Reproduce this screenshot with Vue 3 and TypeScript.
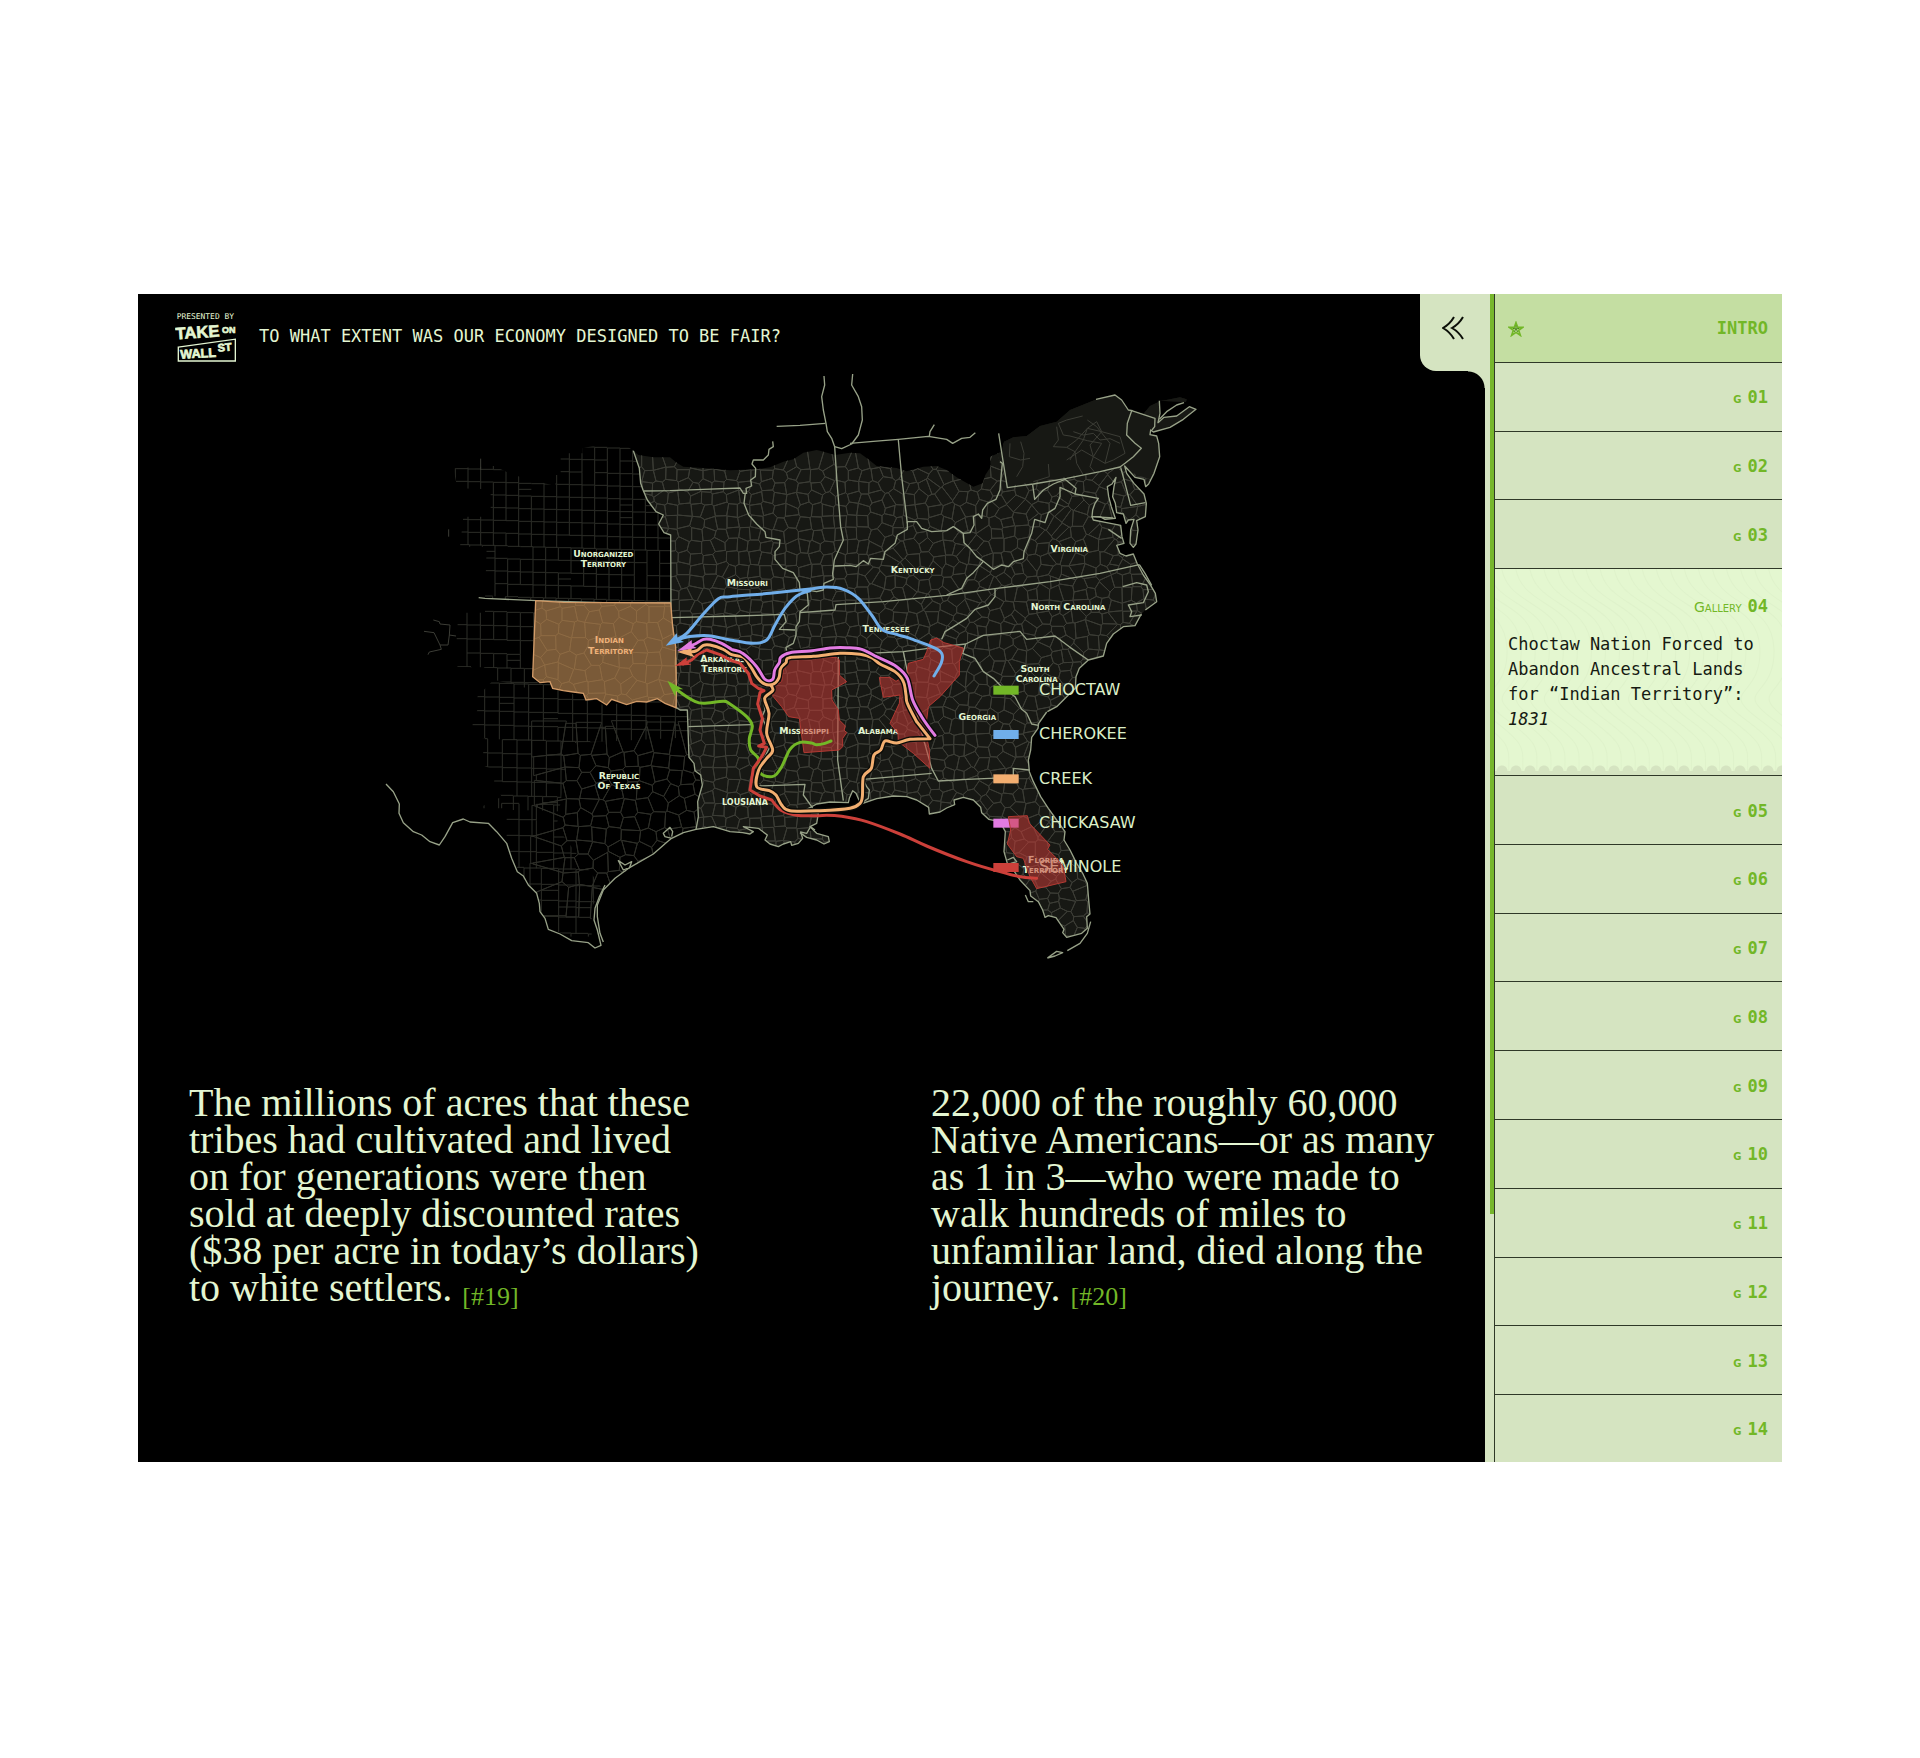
<script setup lang="ts">
import { ref } from 'vue'

type Part = [dx: number, dy: number, points: string]
type Point = [x: number, y: number]

interface Room {
  id: string
  active?: boolean
}

interface Label {
  x: number
  y: number
  text: string
  tone?: string
}

interface Route {
  name: string
  color: string
  d: string
  head?: string
  cased?: boolean
}

/* The map is digitised in four sheets; each sheet has its own origin. */
const NE = 1290
const S = 870

const rooms: Room[] = Array.from({ length: 14 }, (_, i) => ({
  id: String(i + 1).padStart(2, '0'),
  active: i === 3,
}))

const progress = ref(78.8)

function toPoints(parts: Part[]): Point[] {
  return parts.flatMap(([dx, dy, text]) =>
    text
      .trim()
      .split(/\s+/)
      .map((pair) => {
        const [x, y] = pair.split(',').map(Number)
        return [x + dx, y + dy] as Point
      }),
  )
}

function line(parts: Part[], close = false): string {
  return 'M' + toPoints(parts).map((p) => p.join(' ')).join('L') + (close ? 'Z' : '')
}

function curve(parts: Part[]): string {
  const p = toPoints(parts)
  let d = `M${p[0].join(' ')}`
  for (let i = 0; i < p.length - 1; i++) {
    const a = p[Math.max(i - 1, 0)]
    const b = p[i]
    const c = p[i + 1]
    const e = p[Math.min(i + 2, p.length - 1)]
    const c1 = [b[0] + (c[0] - a[0]) / 6, b[1] + (c[1] - a[1]) / 6].map(Math.round)
    const c2 = [c[0] - (e[0] - b[0]) / 6, c[1] - (e[1] - b[1]) / 6].map(Math.round)
    d += `C${c1.join(' ')} ${c2.join(' ')} ${c.join(' ')}`
  }
  return d
}

function noise(seed: number): () => number {
  let s = seed
  return () => {
    s = (s * 1664525 + 1013904223) % 4294967296
    return s / 4294967296
  }
}

/* County mesh: Voronoi cells of a jittered grid. */
function cells(x0: number, y0: number, x1: number, y1: number, size: number, jitter: (x: number) => number, seed: number): string {
  const rnd = noise(seed)
  const cols = Math.ceil((x1 - x0) / size)
  const rows = Math.ceil((y1 - y0) / size)
  const sites: Point[][] = []
  for (let r = 0; r < rows; r++) {
    const row: Point[] = []
    for (let c = 0; c < cols; c++) {
      const x = x0 + (c + 0.5) * size
      const y = y0 + (r + 0.5) * size
      const j = jitter(x) * size * 2
      row.push([x + (rnd() - 0.5) * j, y + (rnd() - 0.5) * j])
    }
    sites.push(row)
  }
  let d = ''
  for (let r = 0; r < rows; r++) {
    for (let c = 0; c < cols; c++) {
      const s = sites[r][c]
      const w = size * 1.6
      let poly: Point[] = [
        [s[0] - w, s[1] - w],
        [s[0] + w, s[1] - w],
        [s[0] + w, s[1] + w],
        [s[0] - w, s[1] + w],
      ]
      for (let rr = Math.max(0, r - 2); rr <= Math.min(rows - 1, r + 2); rr++) {
        for (let cc = Math.max(0, c - 2); cc <= Math.min(cols - 1, c + 2); cc++) {
          if (rr === r && cc === c) continue
          const o = sites[rr][cc]
          const nx = o[0] - s[0]
          const ny = o[1] - s[1]
          const k = nx * ((o[0] + s[0]) / 2) + ny * ((o[1] + s[1]) / 2)
          const next: Point[] = []
          poly.forEach((p, i) => {
            const q = poly[(i + 1) % poly.length]
            const dp = p[0] * nx + p[1] * ny - k
            const dq = q[0] * nx + q[1] * ny - k
            if (dp <= 0) next.push(p)
            if (dp < 0 !== dq < 0) {
              const t = dp / (dp - dq)
              next.push([p[0] + (q[0] - p[0]) * t, p[1] + (q[1] - p[1]) * t])
            }
          })
          poly = next
        }
      }
      if (poly.length > 2) d += 'M' + poly.map((p) => p.map(Math.round).join(' ')).join('L') + 'Z'
    }
  }
  return d
}

/* Surveyed counties: near-square blocks with a few missing sides. */
function blocks(x0: number, y0: number, x1: number, y1: number, w: number, h: number, seed: number): string {
  const rnd = noise(seed)
  let d = ''
  let shift = 0
  let n = 0
  for (let y = y0; y < y1; y += h) {
    if (n++ % 4 === 0) shift = Math.round((rnd() - 0.5) * w * 0.4)
    for (let x = x0 + shift; x < x1; x += w) {
      const drop = Math.round((x - x0) * 0.03)
      if (rnd() > 0.05) d += `M${x} ${y + drop}h${w}`
      if (rnd() > 0.05) d += `M${x} ${y + drop}v${h}`
      if (rnd() > 0.97) d += `M${x} ${y + drop + 18}h${w}`
    }
  }
  return d
}

const coast: Part[] = [
  [NE, 0, '1078,122 1080,160 1074,188 1092,172 1130,168 1168,140 1188,148 1150,178 1110,202 1060,216 1052,210 1050,224 1070,228 1076,250 1079,290 1062,340 1046,372 1037,380 1032,358 1005,352 985,330 974,318 980,340 1002,370 1032,402 1039,430 1036,470 1010,482 1014,510 1008,552 1000,562 990,550 992,510 1002,478 985,480 978,490 970,462 950,458 946,430 938,410 942,380 948,352 936,372 922,380 926,410 934,440 946,475 915,478 900,470 876,470 880,480 920,488 962,496 966,530 972,550 950,556 960,580 978,588 1000,582 1012,612 1030,645 1052,676 1066,700 1070,725 1036,750'],
  [NE, 0, '1024,762 1005,797 970,800 940,822 920,850 910,888 865,900 838,925 828,950 826,985 800,1010 770,1040 742,1055'],
  [NE, S, '740,186 716,220 714,235 695,262 692,300 685,330 688,365 700,395 722,440 745,475 770,510 795,545 792,570 810,600 830,640 848,670 862,700 866,750 870,792 860,800 862,835 845,850 800,862 788,848 792,838 768,803 745,797 735,802 728,780 715,755 692,738 690,722 660,690 640,660 622,640 612,605 616,545 600,515 566,508 545,488 542,472 520,450 490,442 462,450 464,464 440,474 420,486 388,492 386,472 350,450 320,440 280,438 230,446 182,462 168,430 158,422 148,445 145,458 90,456 50,462 20,478 35,490 55,490 50,520 30,530 50,550 85,560 88,575 72,582 50,570 20,562 0,548'],
  [0, S, '1335,540 1322,530 1310,550 1292,546 1298,565 1285,580 1265,586 1262,575 1240,582 1225,590 1200,582 1185,570 1192,555 1165,535 1120,530 1150,545 1140,552 1118,548 1080,545 1030,530 978,538 940,548 905,565 892,575 850,612 780,652 735,685 700,720 682,765 682,800 690,850 700,876'],
]

const northEdge: Part[] = [
  [0, 0, '790,272 805,285 850,292 900,292 920,308 940,320 1000,324 1080,331 1160,328 1200,322 1240,305 1270,298 1300,278 1340,270'],
  [NE, 0, '60,272 105,285 150,278 180,280 205,298 230,318 290,324 320,334 370,320 410,318 440,330 470,352 520,380 548,370 556,345 572,320 570,290 605,275 612,245 640,232 680,228 720,198 770,185 810,150 890,118 945,105 965,122 985,150 1030,162 1050,138 1080,124 1140,112 1160,118 1158,126'],
]

const westEdge: Part[] = [
  [0, S, '978,538 985,500 983,455 997,405 992,375 975,362 972,340 957,322 952,180 930,180 918,172'],
  [0, 0, '919,1000 917,900 908,800 903,770 902,525 882,518 866,492 880,465 858,455 832,420 820,392 812,370 808,325 790,272'],
]

const seaCoast: Part[] = coast.slice(0, 3)
const gulf: Part[] = [[0, S, '1335,540 1322,530 1310,550 1292,546 1298,565 1285,580 1265,586 1262,575 1240,582 1225,590 1200,582 1185,570 1192,555 1165,535 1120,530 1150,545 1140,552 1118,548 1080,545 1030,530 978,538']]
const landPath = line([...northEdge, ...seaCoast, ...gulf, ...westEdge], true)

const eastMesh = cells(780, 290, 2420, 1780, 36, (x) => (x < 1500 ? 0.24 : 0.4), 7)
const texasMesh = cells(540, 1140, 1000, 1620, 44, () => 0.3, 21)
const indianMesh = cells(480, 700, 930, 1060, 44, () => 0.32, 5)
const plainsMesh = blocks(260, 250, 920, 740, 38, 38, 3)
const panhandleMesh = blocks(255, 752, 500, 1000, 40, 42, 11)
const texasBlocks = blocks(305, 968, 1000, 1330, 44, 42, 8)
const southBlocks = blocks(400, 1330, 700, 1740, 52, 48, 4)

const plainsClip = line([[0, 0, '250,325 372,318 430,345 556,378 556,345 572,345 572,280 638,280 638,265 704,250 742,236 790,272 808,325 820,392 832,420 858,455 880,465 866,492 882,518 902,525 903,725 700,727 497,722 345,715 350,560 270,560 280,470 362,470 362,388 262,385']], true)
const panhandleClip = line([[0, 0, '345,715 497,722 490,950 530,1000 375,960 376,925 255,920 265,758 345,758']], true)
const texasClip = line([[0, 0, '365,965 490,955 540,970 560,990 640,1010 700,1035 860,1020 918,1042'], [0, S, '952,180 957,322 975,362 997,405 983,455 978,538 905,565 850,612 735,685 700,720 665,770 665,860 600,860 540,835 515,790 500,730 455,680 430,630 410,580 410,475 325,475 395,440 372,400 375,360 335,345 345,265 305,262 308,222 322,180 322,140']], true)

const borders: string[] = [
  ...coast.slice(0, 3).map((p) => line([p])),
  line([coast[3]]),
  line(westEdge),
  line([[0, 0, '326,713 345,715 500,722 700,728 902,729']]),
  line([[0, 0, '820,393 900,392 1000,388 1110,384 1120,400 1130,400 1128,385 1145,378 1142,360 1156,350 1157,325 1146,312 1150,300 1180,300 1195,285 1197,268 1210,260 1208,244']]),
  line([[0, 0, '1126,398 1122,430 1136,465 1160,492 1185,515 1188,532 1230,540 1228,560 1215,575 1215,598 1238,625 1270,638 1288,668 1290,690 1312,700 1315,735 1290,755 1288,785 1278,800 1278,825 1270,850 1248,862 1252,885 1240,910 1225,950']]),
  line([[0, 0, '904,773 1100,768 1243,763 1248,785 1228,808 1275,810']]),
  line([[0, 0, '1220,199 1290,196 1366,190']]),
  line([[NE, 0, '72,48 74,75 65,110 70,150 78,190 82,215 95,235 104,260 125,266 155,252 175,225 187,180 185,140 175,110 155,75 158,42']]),
  line([[NE, 0, '150,250 220,244 295,238 385,229 440,238 458,250 485,235 510,232 526,218']]),
  line([[NE, 0, '388,229 390,215 403,194']]),
  line([[NE, 0, '104,260 112,380 122,500 130,540 112,580 103,600 98,640 100,658 72,670 70,690 50,695 10,688']]),
  line([[NE, 0, '103,618 150,616 168,620 190,602 205,612 212,595 250,598 255,575 285,550 292,525 322,508 322,485 350,485 365,505 395,515 440,512 460,500 490,520 510,518 522,495 520,470 535,462 545,475 548,450 562,430 588,418 600,390 604,340 607,310 600,305']]),
  line([[NE, 0, '295,240 305,350 322,490']]),
  line([[NE, 0, '596,220 607,290 622,383 700,372 800,355 900,335 960,321 975,310 1000,290 1024,265 1005,250 980,225 982,190 995,152 1065,175 1064,200 1056,210']]),
  line([[NE, 0, '998,152 985,150 965,120 945,105 888,118']]),
  line([[NE, 0, '1078,178 1100,155 1130,135 1152,128']]),
  line([[NE, 0, '962,322 975,370 992,436 1036,428']]),
  line([[NE, 0, '698,374 704,418 730,390 760,372 795,358 828,385 825,402 895,415 885,430 878,450 876,470 940,474']]),
  line([[NE, 0, '825,402 780,382 780,410 765,445 745,458 735,488 704,478 695,520 672,575 670,596 640,605 625,620 605,615 580,628 550,604 530,590 510,565 492,548 490,520']]),
  line([[NE, 0, '550,604 520,638 500,655 485,685 440,705']]),
  line([[NE, 0, '0,758 105,750 108,734 250,725 440,706 585,686 750,665 900,640 1018,614']]),
  line([[NE, 0, '585,686 585,710 565,735 525,748 500,775 460,800 435,815 425,838']]),
  line([[NE, 0, '-45,890 100,885 310,875 425,860 497,852 550,826 660,814 680,838 765,828 810,862 865,900']]),
  line([[NE, 0, '497,852 488,880 525,895 550,935 580,955 605,980 645,1010 665,1048'], [NE, S, '680,190 695,222 715,226']]),
  line([[NE, 0, '115,890 113,1200'], [NE, S, '130,452']]),
  line([[NE, 0, '310,875 325,950 360,1100'], [NE, S, '395,355 415,393 500,388 640,382 640,355 688,360']]),
  line([[NE, S, '190,388 395,370']]),
  line([[NE, S, '190,388 200,410 208,420 205,445 182,460']]),
  line([[0, S, '955,230 1145,224']]),
  line([[0, S, '1165,408 1305,403 1300,435 1325,470 1335,490']]),
  line([[0, S, '1200,130 1180,150 1185,180 1176,200 1190,235 1185,260 1200,290 1180,330 1160,365 1155,410']]),
  line([[0, S, '48,402 70,425 88,462 87,490 100,518 130,545 155,555 180,575 208,585 225,560 248,518 280,507 300,516 355,520 380,545 410,580 425,625 442,665 460,678 475,705 500,730 508,760 510,785 525,805 535,838 570,852 605,872 655,878 675,894 693,886 682,840 672,810 675,775 688,740 705,705']]),
  line([[0, S, '905,565 885,560 880,550 900,532 908,545 905,560']]),
  line([[0, S, '780,652 760,660 745,632 765,645 785,635 778,655']]),
  line([[NE, 0, '968,680 1010,668 1040,675 1045,695 1030,728 985,735 995,755 990,770 1025,765']]),
  line([[NE, 0, '1018,614 1035,640 1055,676']]),
  line([[NE, 0, '925,508 965,535']]),
  line([[NE, S, '872,815 862,850 840,880 802,902']]),
  line([[NE, S, '742,924 770,904 788,908 765,918 742,924']]),
  line([[NE, S, '676,735 685,755 700,755']]),
  line([[NE, S, '622,630 640,622 650,635 632,640']]),
]

const minorLines = [
  line([[0, 0, '190,780 208,785 210,792 240,795 238,825 258,828']]),
  line([[0, 0, '238,825 234,855 210,855 192,818 162,814']]),
  line([[0, 0, '210,855 214,868 178,876 174,884']]),
  line([[0, 0, '236,508 236,530']]),
  line([[0, 0, '332,296 332,330']]),
  line([[NE, 0, '775,190 800,180 848,168']]),
  line([[NE, 0, '770,200 775,240 760,260 800,262 830,240 862,205 890,185 905,215 960,230 975,280 940,300 915,310 880,290 870,255 905,215 862,205 850,240 815,290 810,300']]),
  line([[NE, 0, '810,228 862,242 905,250 880,290 845,270 800,300']]),
  line([[NE, 0, '862,180 890,200 930,250 915,310']]),
  line([[NE, 0, '820,215 850,225 880,220 900,240 930,236 960,250']]),
  line([[NE, 0, '800,262 825,275 830,310 850,345']]),
  line([[NE, 0, '880,290 870,320 885,338']]),
  line([[NE, 0, '775,190 790,225 810,228']]),
  line([[NE, 0, '630,250 628,290 662,300 690,295']]),
  line([[NE, 0, '662,245 672,280 668,320 650,350']]),
  line([[NE, 0, '745,312 748,350 700,365']]),
]

const indianTerritory = line([[0, 0, '497,722 580,727 902,729 908,800 917,860 919,1000 918,1043 885,1030 862,1016 830,1026 800,1024 770,1034 725,1018 710,1035 680,1016 648,1020 640,1000 610,996 580,992 548,985 540,965 510,968 488,950 492,850']], true)

const cessions = [
  line([[1110, 600, '148,296 220,294 290,292 298,300 298,345 320,365 275,390 276,420 295,450 298,480 316,498 312,510 320,518 308,535 308,560 298,570 192,578 178,475 146,470 125,440 100,410 90,385 125,365 130,330']], true),
  line([[1110, 600, '590,234 612,248 670,264 658,305 658,345 640,365 600,410 565,440 560,480 562,540 568,570 570,625 520,580 475,545 474,520 450,490 478,430 480,405 430,412 418,352 450,352 468,364 500,345 505,310 550,298 560,275 572,240']], true),
  line([[NE, S, '625,500 682,497 688,520 750,585 742,598 770,625 790,650 798,695 710,716 690,680 670,625 650,620 622,582 632,540']], true),
]

/* Legend order */
const routes: Route[] = [
  {
    name: 'Choctaw',
    color: '#72b727',
    d: curve([[0, S, '905,106 935,130 970,152 1000,160 1060,154 1080,162 1130,200 1147,228 1138,265 1142,300 1165,325 1164,358 1180,376 1212,378 1235,350 1260,298 1290,277 1325,279'], [NE, S, '50,284 75,280 93,273']]),
    head: line([[0, S, '892,92 940,118 918,118 916,140']], true),
  },
  {
    name: 'Cherokee',
    color: '#70aeea',
    d:
      curve([[0, 0, '915,842 950,820 1000,762 1045,716 1080,710 1200,700 1320,687'], [NE, 0, '80,681 130,688 175,715 215,765 245,808 290,823 330,835 400,862 425,880 424,908 402,948']]) +
      curve([[0, 0, '915,842 955,830 1015,827 1080,840 1150,850 1190,840 1215,795 1245,745 1280,708 1320,692']]),
    head: line([[0, 0, '887,857 920,820 924,836 942,846']], true),
  },
  {
    name: 'Creek',
    color: '#f2ae70',
    cased: true,
    d:
      curve([[0, 0, '955,877 980,872 1000,856 1020,855 1060,868 1085,884 1120,892 1142,920 1160,950 1180,970 1205,974 1226,955 1232,925 1248,908 1258,893 1330,889'], [NE, 0, '120,880 180,883 215,893 240,912 285,935 310,965 318,1005 322,1030 350,1085']]) +
      line([[NE, S, '350,215 390,266']]) +
      curve([[NE, S, '390,266 330,268 290,279 255,273 242,300 222,315 214,355 190,380 187,440 180,460 150,475 60,482 -30,482'], [0, S, '1235,465 1218,435 1198,422 1160,410 1166,360 1190,325 1208,300 1190,250 1197,190 1184,145 1208,122 1200,104 1172,94']]),
    head: line([[0, 0, '922,876 968,860 962,876 974,892']], true),
  },
  {
    name: 'Chickasaw',
    color: '#e27be2',
    cased: true,
    d: curve([[0, 0, '950,860 975,852 1000,838 1020,838 1055,850 1085,868 1118,880 1160,920 1185,958 1208,958 1214,930 1228,908 1232,892 1260,878 1320,873'], [NE, 0, '90,864 140,863 185,868 230,890 290,920 322,955 338,1020 365,1070 405,1126']]),
    head: line([[0, 0, '922,873 965,840 966,856 980,864']], true),
  },
  {
    name: 'Seminole',
    color: '#cc403a',
    d: line([[0, 0, '940,912 965,900 985,882 1010,870 1050,884 1085,902 1110,910 1135,940 1145,970 1165,985 1182,992'], [0, S, '1170,128 1163,162 1177,205 1170,240 1183,280 1166,288 1190,292 1175,320 1150,355 1140,420 1170,438 1205,450']]) + curve([[0, S, '1205,450 1232,480 1280,496 1340,497'], [NE, S, '80,496 125,499 200,515 300,552 380,588 500,635 600,665 660,680 710,685']]),
    head: line([[0, 0, '915,918 950,892 950,906 964,914']], true),
  },
]

/* Back to front */
const drawOrder = [0, 4, 2, 3, 1].map((i) => routes[i])

const cream = '#e4f6d2'
const tan = '#f0b27a'

const labels: Label[] = [
  { x: 700, y: 590, text: 'Unorganized' },
  { x: 700, y: 622, text: 'Territory' },
  { x: 1132, y: 678, text: 'Missouri' },
  { x: 718, y: 850, text: 'Indian', tone: tan },
  { x: 722, y: 882, text: 'Territory', tone: tan },
  { x: 1058, y: 906, text: 'Arkansas' },
  { x: 1062, y: 937, text: 'Territory' },
  { x: 747, y: 1257, text: 'Republic' },
  { x: 747, y: 1288, text: 'Of Texas' },
  { x: 1125, y: 1336, text: 'LOUSIANA' },
  { x: 1302, y: 1122, text: 'Mississippi' },
  { x: 1628, y: 638, text: 'Kentucky' },
  { x: 1548, y: 816, text: 'Tennessee' },
  { x: 2098, y: 577, text: 'Virginia' },
  { x: 2094, y: 750, text: 'North Carolina' },
  { x: 1995, y: 935, text: 'South' },
  { x: 2000, y: 966, text: 'Carolina' },
  { x: 1822, y: 1079, text: 'Georgia' },
  { x: 1524, y: 1122, text: 'Alabama' },
  { x: 2028, y: 1508, text: 'Florida' },
  { x: 2026, y: 1540, text: 'Territory' },
]

const contours = Array.from({ length: 30 }, (_, i) => {
  const x = i * 14 - 120
  return `M${x} -5C${x + 4} 40 ${x + 60} 30 ${x + 62} 80S${x + 20} 120 ${x + 60} 150S${x + 90} 180 ${x + 92} 212`
})
</script>

<template>
  <div class="page">
    <div class="card">
      <main class="stage">
        <header class="top">
          <a class="logo" href="#" aria-label="Presented by Take On Wall St">
            <svg viewBox="28 30 184 155" width="61" height="52">
              <text x="33" y="52" class="logo-small">PRESENTED BY</text>
              <g class="logo-big">
                <text x="31" y="115" font-size="50" transform="rotate(-4 31 115)">TAKE</text>
                <text x="170" y="96" font-size="27">ON</text>
                <text x="45" y="173" font-size="38" transform="rotate(-3 45 173)">WALL</text>
                <text x="158" y="152" font-size="33" transform="rotate(-5 158 152)">ST</text>
              </g>
              <path d="M38 138L210 114V180H38Z" fill="none" stroke="#e4f6d2" stroke-width="4" />
            </svg>
          </a>
          <h1>TO WHAT EXTENT WAS OUR ECONOMY DESIGNED TO BE FAIR?</h1>
          <button class="collapse" type="button" aria-label="Open menu">
            <svg viewBox="0 0 22 24" width="22" height="24" fill="none" stroke="#0c0f08" stroke-width="2">
              <path d="M12 1Q8 8 1 12Q8 16 12 23M21 1Q17 8 10 12Q17 16 21 23" />
            </svg>
          </button>
        </header>

        <svg class="map" viewBox="-696 33 4041 1767" role="img" aria-label="Map of removal routes">
          <defs>
            <clipPath id="land"><path :d="landPath" /></clipPath>
            <clipPath id="plains"><path :d="plainsClip" /></clipPath>
            <clipPath id="panhandle"><path :d="panhandleClip" /></clipPath>
            <clipPath id="texas"><path :d="texasClip" /></clipPath>
            <clipPath id="indian"><path :d="indianTerritory" /></clipPath>
          </defs>

          <path :d="landPath" fill="#171814" />
          <g class="mesh">
            <g clip-path="url(#land)">
              <path :d="eastMesh" />
              <path d="M1900 230L2240 90L2500 100L2400 380L2250 325L1915 378L1880 280Z" class="bare" />
            </g>
            <g class="dim">
              <path :d="plainsMesh" clip-path="url(#plains)" />
              <path :d="panhandleMesh" clip-path="url(#panhandle)" />
              <g clip-path="url(#texas)">
                <path :d="texasBlocks" />
                <path :d="southBlocks" />
                <path d="M600 1150L1000 1130V1480L700 1590L560 1400Z" class="ground" />
                <path :d="texasMesh" />
              </g>
            </g>
            <path v-for="(d, i) in minorLines" :key="i" :d="d" />
          </g>
          <g class="borders">
            <path v-for="(d, i) in borders" :key="i" :d="d" />
          </g>

          <path :d="indianTerritory" fill="#7a5a38" />
          <path :d="indianMesh" clip-path="url(#indian)" fill="none" stroke="#8f6c46" stroke-width="2" />
          <path :d="indianTerritory" fill="none" stroke="#d29b68" stroke-width="4" />

          <text v-for="(l, i) in labels" :key="i" class="place" :class="{ caps: l.text === 'LOUSIANA' }" :x="l.x" :y="l.y" :fill="l.tone ?? cream">{{ l.text }}</text>

          <g v-for="(r, i) in routes" :key="r.name">
            <rect x="1870" :y="977 + i * 133" width="76" height="27" :fill="r.color" />
            <text class="legend" x="2007" :y="1005 + i * 133">{{ r.name }}</text>
          </g>

          <g fill="#c83c38" fill-opacity="0.54" stroke="#b23a33" stroke-width="3">
            <path v-for="(d, i) in cessions" :key="i" :d="d" />
          </g>

          <g v-for="r in drawOrder" :key="r.name" class="route">
            <path v-if="r.cased" :d="r.d" stroke="#0a0b08" stroke-width="17" />
            <path :d="r.d" :stroke="r.color" stroke-width="9" />
            <path :d="r.head" :fill="r.color" class="head" />
          </g>
        </svg>

        <section class="facts">
          <p>
            The millions of acres that these<br />tribes had cultivated and lived<br />on for generations were then<br />sold
            at deeply discounted rates<br />($38 per acre in today’s dollars)<br />to white settlers.
            <a href="#note-19">[#19]</a>
          </p>
          <p>
            22,000 of the roughly 60,000<br />Native Americans—or as many<br />as 1 in 3—who were made to<br />walk
            hundreds of miles to<br />unfamiliar land, died along the<br />journey. <a href="#note-20">[#20]</a>
          </p>
        </section>
      </main>

      <div class="track"><div class="bar" :style="{ height: progress + '%' }"></div></div>

      <nav class="rooms">
        <a class="room intro" href="#intro">
          <svg viewBox="0 0 48 48" width="16" height="16" fill="none" stroke="#72b727" stroke-width="5">
            <path d="M24 5L29 19L44 19L32 28L37 43L24 34L11 43L16 28L4 19L19 19Z" />
            <path d="M24 14V24M24 24L34 22M24 24L30 33M24 24L18 33M24 24L14 22" stroke="#4d8a1c" stroke-width="3" />
          </svg>
          <span class="number">INTRO</span>
        </a>
        <a v-for="room in rooms" :key="room.id" class="room" :class="{ active: room.active }" :href="'#gallery-' + room.id">
          <svg v-if="room.active" class="contours" viewBox="0 0 286 207" preserveAspectRatio="none" aria-hidden="true">
            <path v-for="(d, i) in contours" :key="i" :d="d" />
          </svg>
          <span class="index">
            <span class="kind">{{ room.active ? 'Gallery' : 'G' }}</span>
            <span class="number">{{ room.id }}</span>
          </span>
          <span v-if="room.active" class="title">Choctaw Nation Forced to<br />Abandon Ancestral Lands<br />for “Indian Territory”:<br /><em>1831</em></span>
        </a>
      </nav>
    </div>
  </div>
</template>

<style>
body {
  margin: 0;
  background: #fff;
}
</style>

<style scoped>
.page {
  box-sizing: border-box;
  display: flex;
  min-height: 100vh;
  padding: 294px 138px 296px;
}

.card {
  display: flex;
  flex: 1;
  min-width: 0;
  background: #d5e4c1;
}

.stage {
  display: flex;
  flex: 1;
  flex-direction: column;
  min-width: 0;
  background: #000;
  color: #e4f6d2;
}

.top {
  display: flex;
  align-items: flex-start;
  height: 77px;
}

.logo {
  display: block;
  margin: 17px 23px 0 37px;
}

.logo svg {
  display: block;
}

.logo-small {
  fill: #e4f6d2;
  font: 24px 'DejaVu Sans Mono', monospace;
}

.logo-big {
  fill: #e4f6d2;
  stroke: #e4f6d2;
  stroke-width: 2;
  font-family: 'Liberation Sans', sans-serif;
  font-weight: 700;
}

h1 {
  flex: 1;
  margin: 28px 0 0;
  font: 400 17px/28px 'DejaVu Sans Mono', monospace;
  white-space: nowrap;
}

.collapse {
  position: relative;
  display: grid;
  place-items: center;
  width: 65px;
  height: 77px;
  padding: 0 0 9px;
  border: 0;
  border-radius: 0 0 0 16px;
  background: #d5e4c1;
  cursor: pointer;
}

.collapse::after {
  position: absolute;
  top: 100%;
  right: 0;
  width: 17px;
  height: 17px;
  background: radial-gradient(circle at 0 100%, #000 16px, #d5e4c1 17px);
  content: '';
}

.map {
  display: block;
  width: 100%;
}

.mesh {
  fill: none;
  stroke: #3c3d36;
  stroke-width: 3;
}

.mesh .dim {
  stroke: #2d2e28;
}

.mesh .bare {
  fill: #171814;
  stroke: none;
}

.mesh .ground {
  fill: #000;
  stroke: none;
}

.borders {
  fill: none;
  stroke: #98a288;
  stroke-linejoin: round;
  stroke-width: 4;
}

.place {
  font: 700 28px 'DejaVu Sans', sans-serif;
  font-variant: small-caps;
  text-anchor: middle;
}

.place.caps {
  font-size: 24px;
}

.legend {
  fill: #dcefc8;
  font: 48px 'DejaVu Sans', sans-serif;
  text-transform: uppercase;
}

.route {
  fill: none;
  stroke-linecap: round;
  stroke-linejoin: round;
}

.route .head {
  stroke: none;
}

.facts {
  display: grid;
  grid-template-columns: 742px 1fr;
  margin: 124px 0 0 51px;
}

.facts p {
  margin: 0;
  font: 40px/37px 'Liberation Serif', serif;
  white-space: nowrap;
}

.facts a {
  color: #72b727;
  font-size: 26px;
  line-height: 1;
  text-decoration: none;
  vertical-align: -4px;
}

.track {
  width: 9px;
  border-right: 1px solid #2f3828;
}

.bar {
  width: 4px;
  margin-left: auto;
  background: #76b62c;
}

.rooms {
  display: grid;
  grid-template-rows: repeat(4, 69fr) 207px repeat(9, 69fr) 67fr;
  width: 287px;
}

.room {
  position: relative;
  display: flex;
  align-items: center;
  justify-content: flex-end;
  box-sizing: border-box;
  min-height: 48px;
  padding: 4px 14px 0 13px;
  border-bottom: 1px solid #2f3828;
  color: #72b727;
  text-decoration: none;
}

.room:last-child {
  border-bottom: 0;
}

.intro {
  justify-content: space-between;
  padding-top: 2px;
  background: #c4dea2;
}

.number {
  font: 700 17px/25px 'DejaVu Sans Mono', monospace;
}

.index {
  position: relative;
  z-index: 1;
  display: flex;
  align-items: baseline;
  gap: 6px;
}

.kind {
  font: 400 14px/25px 'DejaVu Sans', sans-serif;
  font-variant: small-caps;
}

.room:not(.active) .kind {
  font-size: 10px;
  font-weight: 700;
}

.active {
  flex-direction: column;
  align-items: flex-end;
  justify-content: flex-start;
  gap: 12px;
  padding-top: 25px;
  background: #e4f7d0;
}

.active::after {
  position: absolute;
  right: 0;
  bottom: 0;
  left: 0;
  height: 10px;
  background:
    linear-gradient(#d5e4c1, #d5e4c1) 0 100% / 100% 4px no-repeat,
    radial-gradient(circle at 50% 6px, #d5e4c1 5px, transparent 6px) 0 0 / 14px 10px repeat-x;
  content: '';
}

.contours {
  position: absolute;
  inset: 0;
  width: 100%;
  height: 100%;
  fill: none;
  stroke: #dff2cb;
  stroke-width: 1;
}

.title {
  position: relative;
  align-self: stretch;
  color: #161a12;
  font: 17px/25px 'DejaVu Sans Mono', monospace;
  white-space: nowrap;
}
</style>
